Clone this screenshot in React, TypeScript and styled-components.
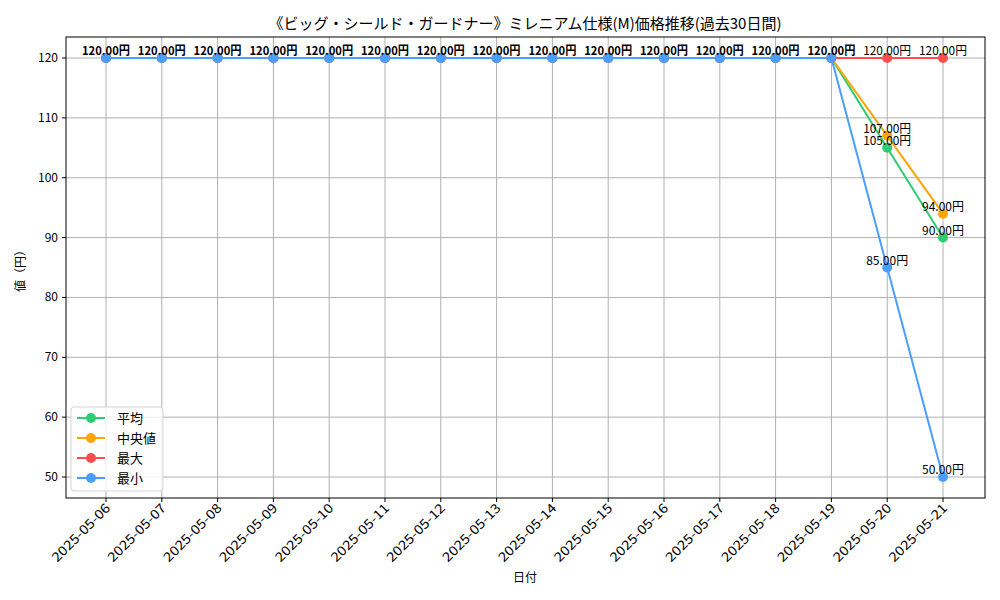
import React from "react";
import styled, { createGlobalStyle } from "styled-components";

const Global = createGlobalStyle`
  body { margin: 0; background: #fff; font-family: "Noto Sans CJK JP", "DejaVu Sans", sans-serif; }
`;

const Figure = styled.div`
  width: 1000px;
  height: 600px;
  background: #fff;
`;

const Chart = styled.svg`
  display: block;
  font-family: "Noto Sans CJK JP", "DejaVu Sans", sans-serif;
`;

const L = 66, R = 985, T = 37, B = 498;
const xs = (i: number) => 106 + i * 55.8;
const ys = (v: number) => 58 + (120 - v) * 5.986;
const dates = Array.from({ length: 16 }, (_, i) => `2025-05-${String(6 + i).padStart(2, "0")}`);
const base = Array(14).fill(120);
const series = [
  { name: "平均", color: "#2ecc71", data: [...base, 105, 90] },
  { name: "中央値", color: "#ffa500", data: [...base, 107, 94] },
  { name: "最大", color: "#ff4d4d", data: [...base, 120, 120] },
  { name: "最小", color: "#4a9eff", data: [...base, 85, 50] },
];

const labels: { i: number; v: number; bold: boolean }[] = [];
const seen = new Set<string>();
series.forEach((s) => s.data.forEach((v, i) => {
  const k = `${i}-${v}`;
  if (!seen.has(k)) { seen.add(k); labels.push({ i, v, bold: i < 14 }); }
}));

export default function App() {
  const yt = [50, 60, 70, 80, 90, 100, 110, 120];
  return (
    <Figure>
      <Global />
      <Chart width={1000} height={600}>
        <text x={525} y={29} fontSize={15} textAnchor="middle">《ビッグ・シールド・ガードナー》ミレニアム仕様(M)価格推移(過去30日間)</text>
        {dates.map((d, i) => (
          <g key={d}>
            <line x1={xs(i)} x2={xs(i)} y1={T} y2={B} stroke="#b0b0b0" strokeWidth={1} />
            <line x1={xs(i)} x2={xs(i)} y1={B} y2={B + 4} stroke="#000" />
            <text fontSize={13} textAnchor="end" textLength={76} lengthAdjust="spacingAndGlyphs" transform={`translate(${xs(i) + 5},${B + 11}) rotate(-45)`}>{d}</text>
          </g>
        ))}
        {yt.map((v) => (
          <g key={v}>
            <line x1={L} x2={R} y1={ys(v)} y2={ys(v)} stroke="#b0b0b0" />
            <line x1={L - 4} x2={L} y1={ys(v)} y2={ys(v)} stroke="#000" />
            <text x={L - 8} y={ys(v) + 4} fontSize={12} textAnchor="end">{v}</text>
          </g>
        ))}
        <rect x={L} y={T} width={R - L} height={B - T} fill="none" stroke="#000" />
        {series.map((s) => (
          <g key={s.name}>
            <polyline fill="none" stroke={s.color} strokeWidth={2} points={s.data.map((v, i) => `${xs(i)},${ys(v)}`).join(" ")} />
            {s.data.map((v, i) => <circle key={i} cx={xs(i)} cy={ys(v)} r={5} fill={s.color} />)}
          </g>
        ))}
        {labels.map(({ i, v, bold }) => (
          <text key={`${i}-${v}`} x={xs(i)} y={ys(v) - 3} fontSize={12} textAnchor="middle" fontWeight={bold ? 600 : 400} textLength={v >= 100 ? 48 : 42} lengthAdjust="spacingAndGlyphs">{v.toFixed(2)}円</text>
        ))}
        <text fontSize={12} textAnchor="middle" transform="translate(25,268) rotate(-90)">値（円）</text>
        <text x={525} y={582} fontSize={12} textAnchor="middle">日付</text>
        <rect x={71} y={407} width={92} height={84} rx={3} fill="#fff" fillOpacity={0.8} stroke="#d5d5d5" />
        {series.map((s, k) => (
          <g key={s.name}>
            <line x1={77} x2={105} y1={418 + k * 20} y2={418 + k * 20} stroke={s.color} strokeWidth={2} />
            <circle cx={91} cy={418 + k * 20} r={5} fill={s.color} />
            <text x={117} y={423 + k * 20} fontSize={13}>{s.name}</text>
          </g>
        ))}
      </Chart>
    </Figure>
  );
}
